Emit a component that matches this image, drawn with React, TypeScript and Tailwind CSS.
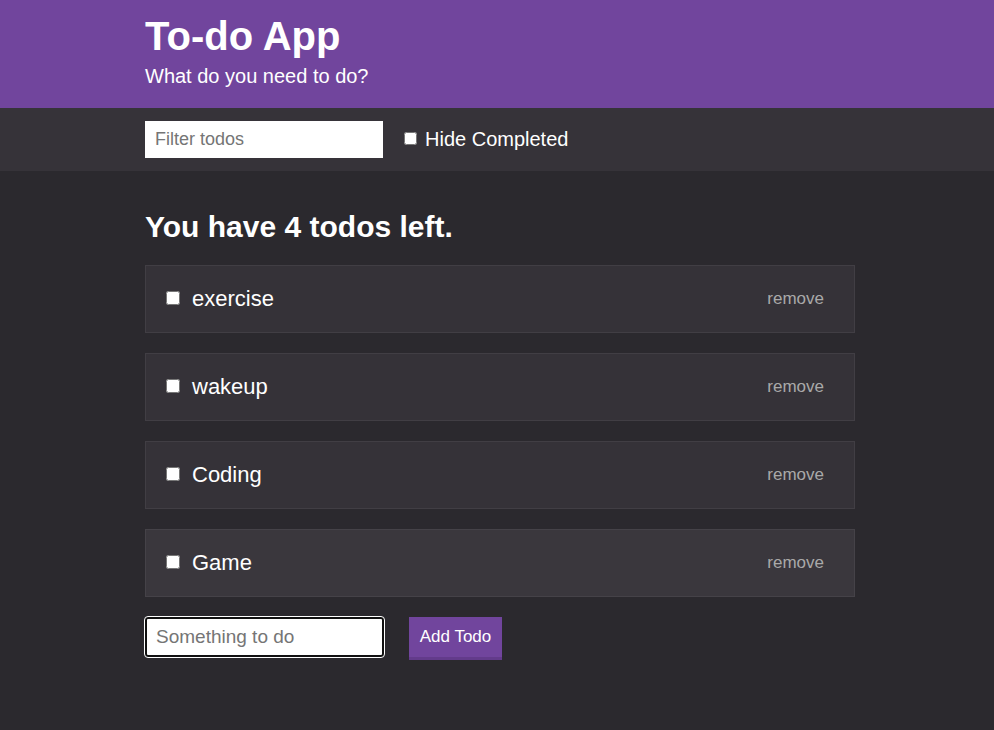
import React, { useState } from "react";

const initialTodos = [
  { id: 1, text: "exercise", done: false },
  { id: 2, text: "wakeup", done: false },
  { id: 3, text: "Coding", done: false },
  { id: 4, text: "Game", done: false },
];

const App = () => {
  const [todos, setTodos] = useState(initialTodos);

  const left = todos.filter((t) => !t.done).length;

  return (
    <div className="min-h-[730px] bg-[#2b292e] font-['Liberation_Sans',Arial,sans-serif] text-white">
      {/* Header */}
      <header className="bg-[#71459d] h-[108px] pt-[13px]">
        <div className="ml-[145px]">
          <h1 className="text-[40px] font-bold leading-[46px]">To-do App</h1>
          <p className="text-[20px] leading-[23px] mt-[6px]">What do you need to do?</p>
        </div>
      </header>

      {/* Filter bar */}
      <div className="bg-[#363339] h-[63px] flex items-center">
        <div className="ml-[145px] flex items-center">
          <input
            type="text"
            placeholder="Filter todos"
            className="w-[238px] h-[37px] bg-white text-black text-[18px] px-[10px] placeholder:text-[#757575] outline-none"
          />
          <label className="flex items-center ml-[21px] text-[20px] -mt-[1px]">
            <input type="checkbox" className="w-[13px] h-[13px] mr-[8px] -mt-[2px]" />
            Hide Completed
          </label>
        </div>
      </div>

      {/* Main */}
      <main className="ml-[145px] w-[710px] pt-[39px]">
        <h2 className="text-[30px] font-bold leading-[34px]">You have {left} todos left.</h2>

        <ul className="mt-[21px] flex flex-col gap-[20px]">
          {todos.map((todo, index) => (
            <li
              key={todo.id}
              className={
                index === todos.length - 1
                  ? "h-[68px] flex items-center border border-[#454248] bg-[#3a373d] pl-[20px] pr-[30px]"
                  : "h-[68px] flex items-center border border-[#413e44] bg-[#353238] pl-[20px] pr-[30px]"
              }
            >
              <input
                type="checkbox"
                checked={todo.done}
                onChange={() =>
                  setTodos(todos.map((t) => (t.id === todo.id ? { ...t, done: !t.done } : t)))
                }
                className="w-[14px] h-[14px] -mt-[3px]"
              />
              <span className="ml-[12px] text-[22px] -mt-[2px]">{todo.text}</span>
              <button
                onClick={() => setTodos(todos.filter((t) => t.id !== todo.id))}
                className="ml-auto text-[17px] text-[#a9a9a9] -mt-[1px]"
              >
                remove
              </button>
            </li>
          ))}
        </ul>

        {/* Add form */}
        <div className="mt-[20px] flex items-start">
          <input
            type="text"
            placeholder="Something to do"
            className="w-[239px] h-[40px] bg-white text-black text-[19px] px-[9px] rounded-[3px] border-2 border-[#111] outline outline-1 outline-white placeholder:text-[#757575]"
          />
          <button className="ml-[25px] w-[93px] h-[43px] bg-[#71459d] border-b-[3px] border-[#633b8b] text-[17px] text-white">
            Add Todo
          </button>
        </div>
      </main>
    </div>
  );
};

export default App;
